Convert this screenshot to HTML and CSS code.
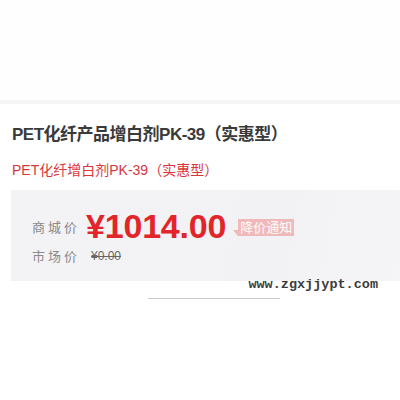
FILE: index.html
```html
<!DOCTYPE html>
<html lang="zh-CN">
<head>
  <meta charset="UTF-8" />
  <title>PET化纤产品增白剂PK-39（实惠型）</title>
  <link rel="stylesheet" href="styles.css">
</head>
<body>
  <div class="top"></div>
  <div class="sep"></div>

  <main class="card">
    <h1 class="title">PET化纤产品增白剂PK-39（实惠型）</h1>
    <p class="subtitle">PET化纤增白剂PK-39（实惠型）</p>

    <section class="pricebox">
      <div class="row">
        <span class="label">商城价</span>
        <span class="price">¥1014.00</span>
        <span class="notice">降价通知</span>
      </div>
      <div class="row market">
        <span class="label">市场价</span>
        <span class="old">¥0.00</span>
      </div>
      <div class="wm">www.zgxjjypt.com</div>
    </section>

    <div class="bar"></div>
  </main>
</body>
</html>
```

FILE: styles.css
```css
/* ===== base ===== */
*{box-sizing:border-box;}
html,body{margin:0;}
body{
  background:#fff;color:#333;
  font-family:'Liberation Sans','Noto Sans CJK SC',sans-serif;
  width:400px;height:400px;overflow:hidden;
}
.top{height:100px;background:#fefefe;}
.sep{height:4px;background:#f5f5f6;}

/* ===== title block ===== */
.card{padding:0 0 0 11px;}
.title{
  margin:19px 0 0 1px;font-size:17px;line-height:24px;
  font-weight:bold;color:#3a3a3a;letter-spacing:-.5px;
}
.subtitle{
  margin:13px 0 0 1px;font-size:14px;line-height:20px;
  color:#d9363b;
}

/* ===== price box ===== */
.pricebox{
  margin-top:10px;height:91px;padding:16px 0 0 21px;
  background:linear-gradient(100deg,#f3f2f4 0%,#f2f1f3 70%,#f5f4f6 100%);
  position:relative;
}
.row{display:flex;align-items:center;}
.label{font-size:13px;color:#8a8a8a;letter-spacing:3px;width:54px;}
.price{
  font-size:34px;line-height:40px;font-weight:bold;color:#e1252b;
  letter-spacing:-.2px;
}
.notice{
  position:relative;margin-left:12px;margin-top:3px;
  background:#efb4b4;color:#fff;font-size:13px;line-height:17px;
  padding:0 2px;opacity:.9;
}
.notice::before{
  content:'';position:absolute;left:-5px;bottom:0;
  border-style:solid;border-width:0 5px 6px 0;
  border-color:transparent #efb4b4 transparent transparent;
}
.market{margin-top:-1px;height:21px;}
.old{
  font-size:12px;color:#666;text-decoration:line-through;margin-left:5px;
}
.wm{
  position:absolute;right:22px;bottom:-11px;
  font-family:'Liberation Mono',monospace;font-weight:bold;
  font-size:13.5px;color:#3c3c3c;
}

/* ===== bottom bar ===== */
.bar{margin:17px 0 0 137px;width:132px;height:1px;background:#c9c9cc;}
```
